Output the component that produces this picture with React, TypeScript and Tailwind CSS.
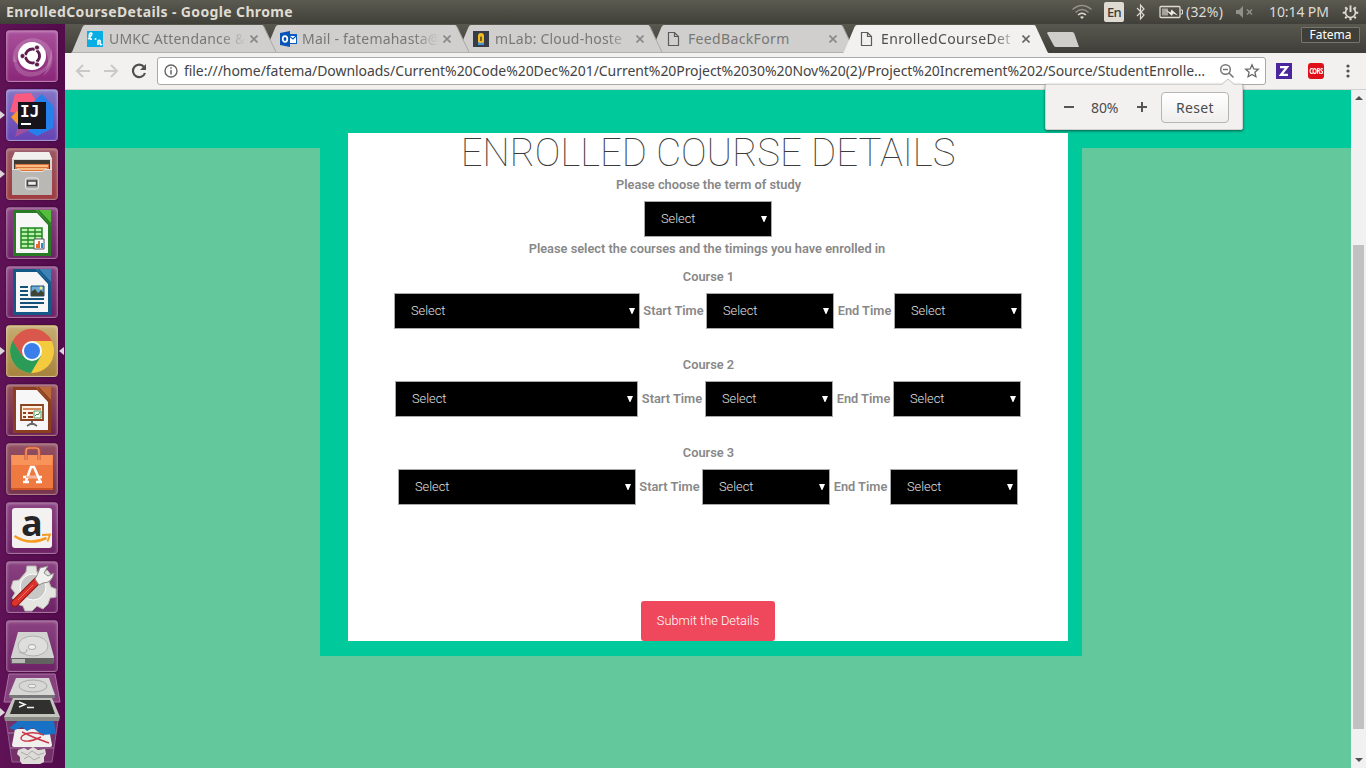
import React from "react";

type TileProps = { tone: string; children: React.ReactNode; left?: boolean; right?: boolean };

function Tile({ tone, children, left, right }: TileProps) {
  return (
    <div className={`relative h-[52px] w-[52px] shrink-0 rounded-[4px] border border-white/25 shadow-[inset_0_1px_3px_rgba(255,255,255,0.35),0_0_2px_rgba(0,0,0,0.5)] ${tone}`}>
      <svg viewBox="0 0 52 52" className="-ml-px -mt-px h-[52px] w-[52px] overflow-visible">{children}</svg>
      {left && <span className="absolute -left-[7px] top-[21px] h-0 w-0 border-y-[4px] border-l-[5px] border-y-transparent border-l-[#dcd6da]" />}
      {right && <span className="absolute -right-[7px] top-[21px] h-0 w-0 border-y-[4px] border-r-[5px] border-y-transparent border-r-[#dcd6da]" />}
    </div>
  );
}

function DocShape({ dark, mid }: { dark: string; mid: string }) {
  return (
    <>
      <path d="M7 3h26l12 12v34H7z" fill={dark} />
      <path d="M30 3h15v15z" fill={mid} />
      <path d="M32 3l13 14" stroke={dark} strokeWidth="1.5" />
      <path d="M10 6h21l11 12v28H10z" fill="#f7f7f7" />
    </>
  );
}

function Launcher() {
  return (
    <aside className="relative flex w-[65px] shrink-0 flex-col gap-[7px] overflow-hidden bg-gradient-to-r from-[#5f1256] to-[#530b4c] pl-1.5 pt-1.5">
      <Tile tone="bg-gradient-to-b from-[#a8509b] to-[#8b2679]">
        <path d="M7 32C4 12 27 0 42 15c8 10 5 25-5 31 6-10 7-19 1-27C28 10 12 15 11 32z" fill="#fff" opacity=".18" />
        <path d="M45 18c5 18-10 32-26 28C9 43 7 34 8 25c3 12 10 18 20 17 11-1 17-10 17-24z" fill="#fff" opacity=".18" />
        <circle cx="26" cy="26" r="14" fill="#fff" />
        <circle cx="26.500" cy="26" r="7" fill="none" stroke="#5e1d50" strokeWidth="3" />
        <path d="M26 26H14M26 26l6-10M26 26l6 10" stroke="#fff" strokeWidth="1.600" />
        <circle cx="26.500" cy="26" r="5.300" fill="#fff" />
        <g fill="#5e1d50" stroke="#fff" strokeWidth=".8"><circle cx="16.500" cy="26" r="2.500" /><circle cx="31" cy="17.500" r="2.500" /><circle cx="31" cy="34.500" r="2.500" /></g>
      </Tile>
      <Tile tone="bg-gradient-to-b from-[#8475c5] to-[#6742b3]" left>
        <path d="M9 5l16-1 8 12-12 9-17-2z" fill="#fb5a80" />
        <path d="M5 28l6-6 8 7-6 8z" fill="#f89a2c" />
        <path d="M36 5l12 13-1 21-16 8-14-8 6-22z" fill="#2680ec" />
        <path d="M13 33l14 6-18 9z" fill="#a04f9e" />
        <path d="M12 13h28v27H12z" fill="#16131a" />
        <path d="M15 35h10" stroke="#fff" strokeWidth="2" />
        <text x="14" y="28" fill="#fff" fontSize="16" fontWeight="700" className="font-['DejaVu_Sans_Mono',monospace]">IJ</text>
      </Tile>
      <Tile tone="bg-gradient-to-b from-[#9a5664] to-[#9e3b40]" left>
        <path d="M9 4h34l3 7v12H6V11z" fill="#d6d5d2" />
        <path d="M9 4h34l3 7H6z" fill="#f1f0ee" />
        <path d="M8 12h36v11H8z" fill="#403a35" />
        <path d="M9 16h34v7H9z" fill="#df7139" /><path d="M10 18h32M11 21h30" stroke="#ffd69c" strokeWidth="1.300" />
        <path d="M6 21h7l2 2h22l2-2h7v26H6z" fill="#b9b8b5" />
        <path d="M6 21.500h7l2 2h22l2-2h7" stroke="#e4e3df" fill="none" />
        <rect x="19.500" y="30" width="13" height="11" rx="2" fill="#aaa" stroke="#eee" strokeWidth="1" />
        <rect x="21.500" y="33" width="9" height="4.500" fill="#eee" stroke="#444" strokeWidth="1.500" />
      </Tile>
      <Tile tone="bg-gradient-to-b from-[#8b4382] to-[#6e2266]">
        <DocShape dark="#287a26" mid="#54bd3c" />
        <path d="M15 21h21v20H15z" fill="#b9f3ab" stroke="#218521" strokeWidth="1.500" />
        <path d="M15 25h21M15 29h21M15 33h21M15 37h21M22 21v20M29 21v20" stroke="#218521" strokeWidth="1.300" />
        <path d="M28 32h10v10H28z" fill="#fff" stroke="#56515a" /><path d="M30 41v-4h2v4M32 41v-7h2v7" fill="#e56b2a" /><path d="M35 41v-5h2v5" fill="#3588bf" />
      </Tile>
      <Tile tone="bg-gradient-to-b from-[#8b4382] to-[#6e2266]">
        <DocShape dark="#145888" mid="#3d83b5" />
        <path d="M14 21h8M14 25h8M14 29h8M14 33h24M14 37h24M14 41h18" stroke="#165179" strokeWidth="2" />
        <path d="M25 20h13v10H25z" fill="#69acd7" stroke="#174f72" /><path d="M25 30v-4l4-3 3 4 3-3 3 3v3z" fill="#3f4535" /><circle cx="35" cy="22" r="1.500" fill="#ffe76d" />
      </Tile>
      <Tile tone="bg-gradient-to-b from-[#c6ad73] to-[#a6823c]" left right>
        <circle cx="26" cy="26" r="22" fill="#f4cb3f" />
        <path d="M26 26L6.500 16A22 22 0 0 0 25 48l10-17z" fill="#2a9c58" />
        <path d="M26 26l-10 5L6.500 16A22 22 0 0 1 46 16H26z" fill="#d9584b" />
        <circle cx="26" cy="26" r="10" fill="#f7fcff" /><circle cx="26" cy="26" r="8" fill="#397ee9" />
      </Tile>
      <Tile tone="bg-gradient-to-b from-[#965056] to-[#6e2255]">
        <DocShape dark="#893f20" mid="#bc6a3a" />
        <path d="M15 21h22v15H15z" fill="#fff0e4" stroke="#8c431f" strokeWidth="1.800" />
        <path d="M17 25h18" stroke="#c76a36" strokeWidth="1.500" /><path d="M17 29h3M22 29h5M17 33h3M22 33h5" stroke="#923d1d" strokeWidth="2" />
        <path d="M28 27h7v7h-7z" fill="#fff" stroke="#4e9c58" /><path d="M29 32l2-2 1 1 2-3" stroke="#378d43" fill="none" />
        <path d="M26 37v3M21 42l5-3 5 3" stroke="#6b6570" strokeWidth="2" fill="none" />
      </Tile>
      <Tile tone="bg-gradient-to-b from-[#925064] to-[#77354d]">
        <path d="M5 12h42v34H5z" fill="#ee7a42" /><path d="M5 12h42l-1 10H6z" fill="#f8945a" /><path d="M5 45h42v2H5z" fill="#cf5527" />
        <path d="M20 17V8q0-3 3-3h7q3 0 3 3v9" fill="none" stroke="#c9542e" strokeWidth="3" /><path d="M20 17V8q0-3 3-3h7q3 0 3 3v9" fill="none" stroke="#f6a57c" strokeWidth="1.200" />
        <path d="M20 38l5-14h3l6 14M17 34h19M17 39h6M30 39h6" fill="none" stroke="#fff" strokeWidth="2.500" /><path d="M20 34h11" stroke="#e96d39" strokeWidth="1" />
      </Tile>
      <Tile tone="bg-gradient-to-b from-[#8b4382] to-[#6e2266]">
        <rect x="6" y="6" width="40" height="40" rx="3" fill="#f3f2f1" />
        <text x="15" y="34" fontSize="36" fontWeight="700" fill="#252528" className="font-['Open_Sans',sans-serif]">a</text>
        <path d="M8.500 34q15 10 32 2" fill="none" stroke="#f79920" strokeWidth="2.500" /><path d="M36 33l8-.5-2.500 7" fill="none" stroke="#f79920" strokeWidth="1.800" />
      </Tile>
      <Tile tone="bg-gradient-to-b from-[#8b4382] to-[#6e2266]">
        <path d="M20 11l1-6h9l1 6 5 2 5-4 5 6-3 6 2 5 5 2v8l-6 1-2 6-5 5-6-3-5 5h-7l-2-5-6-2-5-6 3-5-4-5 2-7 6-1z" fill="#e4e4e1" stroke="#b8b8b3" />
        <circle cx="27" cy="26" r="13" fill="#c8c9c7" stroke="#fff" />
        <path d="M9 42L33 18" stroke="#8d1614" strokeWidth="8" strokeLinecap="round" /><path d="M9 42L32 19" stroke="#db332b" strokeWidth="6" strokeLinecap="round" />
        <path d="M29 18q3-5 5-11l8-2-4 7 4 3 6-3q-2 10-11 10l-4 2z" fill="#f0f0ee" stroke="#8d8d89" /><path d="M12 39l15-15" stroke="#ed7368" strokeWidth="1" />
      </Tile>
      <Tile tone="bg-gradient-to-b from-[#8b4382] to-[#6e2266]">
        <path d="M5 37l7-25h29l7 25-1 7H5z" fill="#d2d2d0" /><path d="M4 38h44l-1 6H5z" fill="#626260" /><path d="M6 39h13v4H6z" fill="#b9b9b6" />
        <ellipse cx="27" cy="26" rx="15" ry="10" fill="#dededc" stroke="#b0b0ae" /><ellipse cx="26" cy="27" rx="4" ry="2.500" fill="#eee" stroke="#aaa" /><path d="M13 32q8 3 8-3" fill="none" stroke="#aaa" />
      </Tile>
      <svg viewBox="0 0 65 95" className="absolute left-0 top-[649px] h-[95px] w-[65px]">
        <path d="M9 1h46l5 28H4z" fill="#86427e" stroke="#a8749f" />
        <path d="M16 5h33l6 17H9z" fill="#d7d7d5" /><path d="M9 22h46v3H10z" fill="#77777a" /><ellipse cx="33" cy="13" rx="14" ry="6" fill="none" stroke="#aaa" /><ellipse cx="32" cy="13" rx="4" ry="1.800" fill="#eee" stroke="#aaa" />
        <path d="M6 47h52l-6 42H12z" fill="#743069" stroke="#935e8b" />
        <path d="M8 60h48M10 75h44" stroke="#a878a0" />
        <path d="M15 56h34l3 16q0 2-2 2H14q-2 0-2-2z" fill="#f0efee" />
        <path d="M9 55l9-7h36l2 13-14 1-9-7-6 3-5-4-7 3z" fill="#1871c4" />
        <path d="M44 62q-14-5-22 1c-4 5 5 8 19 1M22 59q12 6 27 11" fill="none" stroke="#c9394a" strokeWidth="1.400" />
        <path d="M18 77l6-2 4 2 5-3 5 3 7-1 1 5-2 3v5l-4 2H22l-2-3v-4l-3-3z" fill="#dddcd9" /><path d="M21 79l6 3 5-4 6 4 6-2M24 86l5-3 5 4 6-3" stroke="#aaa8a6" fill="none" />
        <path d="M13 25h39l8 19H4z" fill="#c4c4bf" /><path d="M4 44h56l-1 4H5z" fill="#898a86" /><path d="M15 27h35l5 14H10z" fill="#30312f" />
        <path d="M19 29l6 2.500-6 2.500M27 34.500h7" fill="none" stroke="#f1f1ee" strokeWidth="1.500" />
        <path d="M0 35l5 4.500-5 4z" fill="#dcd6da" />
      </svg>
    </aside>
  );
}

function TopBar() {
  return (
    <header className="flex h-6 shrink-0 items-center bg-gradient-to-b from-[#5c5b51] to-[#403f39] pl-1.5 pr-[7px] text-[14px] leading-none text-[#dfdbd2]">
      <span className="whitespace-nowrap text-[14px] font-bold tracking-[0.37px]">EnrolledCourseDetails - Google Chrome</span>
      <div className="flex-1" />
      <svg viewBox="0 0 20 16" className="mr-[12px] h-4 w-5 fill-none stroke-[#dfdbd2]">
        <path d="M.5 5.500q9.500-8 19 0M3.500 8.500q6.500-6 13 0" opacity=".45" strokeWidth="1.500" /><path d="M6 11q4-3.500 8 0" strokeWidth="1.500" /><path d="M8 13q2-1.500 4 0l-2 2z" className="fill-[#dfdbd2]" stroke="none" />
      </svg>
      <span className="mr-[12px] flex h-5 w-5 items-center justify-center rounded-[2px] bg-[#dfdbd2] text-[13px] font-medium tracking-[-0.8px] text-[#3c3b37]">En</span>
      <svg viewBox="0 0 10 18" className="mr-[13px] h-[18px] w-[10px] fill-none stroke-[#dfdbd2]"><path d="M1 5l7 7-3.500 4V2L8 6l-7 7" strokeWidth="1.200" /></svg>
      <svg viewBox="0 0 25 14" className="mr-[2px] h-[14px] w-[25px] fill-none stroke-[#dfdbd2]">
        <rect x="1" y="1.500" width="20" height="11" rx="1" strokeWidth="1.300" /><path d="M21.500 5h2v4h-2" /><path d="M3 3.500h6v7H3z" fill="#a5a299" stroke="none" /><path d="M6 4.500l5.500 3L12.500 4.500l6.500 6-5-2-1 2.500z" className="fill-[#efece5]" stroke="none" />
      </svg>
      <span className="w-[38px] whitespace-nowrap text-[14px] tracking-[0.2px]">(32%)</span>
      <svg viewBox="0 0 18 14" className="ml-[12px] mr-[15px] h-[14px] w-[18px]"><path d="M0 5h3l4-4v12L3 9H0z" fill="#92908a" /><path d="M11 4.500l5 5m0-5l-5 5" stroke="#92908a" strokeWidth="1.500" /></svg>
      <span className="w-[62px] whitespace-nowrap text-[14px] tracking-[-0.1px]">10:14 PM</span>
      <svg viewBox="0 0 18 18" className="ml-[11px] h-[17px] w-[17px] fill-none stroke-[#dfdbd2]">
        <path d="M6 4.600a5.300 5.300 0 1 0 6 0" strokeWidth="1.800" /><path d="M9 1.500v7" strokeWidth="2" />
        <path d="M3.400 3.400l1.600 1.600m9.600-1.600L13 5M.8 9.200h2.400m11.600 0h2.400M3.400 15l1.600-1.600m9.600 1.600L13 13.400M9 14.500v2.700" strokeWidth="2.200" />
      </svg>
    </header>
  );
}

const FileIcon = () => (
  <svg viewBox="0 0 16 16" className="h-4 w-4 fill-none stroke-[#5b5b5b]"><path d="M2.500 1.500h6l4 4v9h-10zM8.500 1.500v4h4" strokeWidth="1.200" /></svg>
);

const AttendanceIcon = () => (
  <svg viewBox="0 0 16 16" className="h-4 w-4"><path d="M0 0h16v16H0z" fill="#08aee3" /><path d="M1 8c3-2 5-6 3-6S1 9 5 8M11 14v-4c1-1 3-1 2 2 0 2 1 2 2 1" fill="none" stroke="#fff" strokeWidth="1.600" /><circle cx="8.500" cy="8" r="1" fill="#fff" /></svg>
);

const OutlookIcon = () => (
  <svg viewBox="0 0 17 16" className="h-4 w-[17px]"><path d="M9 3h8v10H9z" fill="#0a5cc0" /><path d="M9 5h7v7H9z" fill="#fff" /><path d="M9 5l4 3 3-3" fill="none" stroke="#0a5cc0" strokeWidth="1.200" /><path d="M0 2l10-2v16L0 14z" fill="#0755b8" /><ellipse cx="5" cy="8" rx="2.300" ry="2.900" fill="none" stroke="#fff" strokeWidth="1.700" /></svg>
);

const MlabIcon = () => (
  <svg viewBox="0 0 16 16" className="h-4 w-4"><path d="M0 0h16v16H0z" fill="#363d46" /><path d="M5 12V5q0-3 3-3t3 3v7z" fill="#f2bd26" /><path d="M7.200 10V6q.8-1.500 1.600 0v4z" fill="#594b22" /><path d="M5 11q3 2 6 0v3H5z" fill="#4a91d6" /></svg>
);

const tabs = [
  { title: "UMKC Attendance &", icon: <AttendanceIcon />, look: "z-[5] tracking-[0.2px]" },
  { title: "Mail - fatemahasta@", icon: <OutlookIcon />, look: "z-[4] tracking-[0.2px]" },
  { title: "mLab: Cloud-hoste", icon: <MlabIcon />, look: "z-[3] tracking-[0.2px]" },
  { title: "FeedBackForm", icon: <FileIcon />, look: "z-[2] tracking-[0.35px]", full: true },
  { title: "EnrolledCourseDet", icon: <FileIcon />, look: "z-[6] tracking-[0.35px]", active: true },
];

function TabStrip() {
  return (
    <div className="flex h-[29px] shrink-0 bg-gradient-to-b from-[#59584f] to-[#3f3e39] pl-[6px]">
      {tabs.map((t) => (
        <div key={t.title} className={`relative mr-[-13px] flex h-[29px] w-[206px] shrink-0 items-center pl-4 ${t.look}`}>
          <svg viewBox="0 0 206 29" className="absolute inset-0 h-[29px] w-[206px]">
            <path d="M0 29L1 28 11.500 3Q12.500 1 14 1H191q1.500 0 2 2L204.500 28l1 1z" fill={t.active ? "#f2f1ef" : "#d0cfcd"} />
            {!t.active && <path d="M192.500 2L205 28" fill="none" stroke="#aaa9a5" />}
            {!t.active && <path d="M1 28.500h204" stroke="#b2b1ae" />}
          </svg>
          <span className="relative flex w-[22px]">{t.icon}</span>
          <span className={`relative w-[137px] whitespace-nowrap text-[14px] leading-5 ${t.full ? "" : "[mask-image:linear-gradient(to_right,black_82%,transparent_100%)]"} ${t.active ? "text-[#4f4f4f]" : "text-[#777775]"}`}>{t.title}</span>
          <svg viewBox="0 0 8 8" className="relative ml-[4px] h-2 w-2"><path d="M.5.5l7 7m0-7l-7 7" stroke={t.active ? "#666" : "#888"} strokeWidth="1.600" /></svg>
        </div>
      ))}
      <svg viewBox="0 0 34 16" className="ml-[11px] mt-2 h-4 w-[34px]"><path d="M1 0h24q2 0 2.500 2l4.500 13H9q-2 0-2.500-2L0 1z" fill="#cfcecb" /></svg>
      <div className="flex-1" />
      <span className="mr-[6px] mt-[3px] flex h-4 w-[59px] items-center justify-center rounded-[1px] border border-[#77766d] bg-[#3f3e39] text-[12px] leading-none text-white">Fatema</span>
    </div>
  );
}

function Toolbar() {
  return (
    <div className="relative z-10 flex h-[37px] shrink-0 items-center border-b border-[#d2d1cf] bg-[#f2f1f0] pl-[10px]">
      <svg viewBox="0 0 16 16" className="h-4 w-4 fill-none stroke-[#c9c9c8]"><path d="M15 8H2m6-6L2 8l6 6" strokeWidth="2" /></svg>
      <svg viewBox="0 0 16 16" className="ml-3 h-4 w-4 fill-none stroke-[#c9c9c8]"><path d="M1 8h13M8 2l6 6-6 6" strokeWidth="2" /></svg>
      <svg viewBox="0 0 16 16" className="ml-3 h-4 w-4 fill-none stroke-[#505050]"><path d="M13 4A6.200 6.200 0 1 0 14 10" strokeWidth="2.200" /><path d="M15 1v6H9z" className="fill-[#505050]" stroke="none" /></svg>
      <div className="ml-[10px] flex h-7 w-[1109px] items-center rounded-[3px] border border-[#a9a9a7] bg-white pl-[6px]">
        <svg viewBox="0 0 14 14" className="h-[14px] w-[14px] fill-none stroke-[#666]"><circle cx="7" cy="7" r="6" strokeWidth="1.400" /><path d="M7 6v4.500M7 3.300v1.500" strokeWidth="1.500" /></svg>
        <span className="ml-[6px] w-[1030px] whitespace-nowrap text-[14px] leading-5 tracking-[-0.06px] text-[#444]">file:///home/fatema/Downloads/Current%20Code%20Dec%201/Current%20Project%2030%20Nov%20(2)/Project%20Increment%202/Source/StudentEnrolle…</span>
        <svg viewBox="0 0 16 16" className="ml-[5px] h-4 w-4 fill-none stroke-[#777]"><circle cx="6.500" cy="6.500" r="4.800" strokeWidth="1.500" /><path d="M4 6.500h5M10 10l4.500 4.500" strokeWidth="1.600" /></svg>
        <svg viewBox="0 0 16 16" className="ml-[9px] h-4 w-4 fill-none stroke-[#666]"><path d="M8 1.800l1.800 4.100 4.500.4-3.400 3 1 4.400L8 11.400l-3.900 2.300 1-4.400-3.400-3 4.500-.4z" strokeWidth="1.300" /></svg>
      </div>
      <span className="ml-[10px] flex h-4 w-4 items-center justify-center bg-[#4a259b]"><svg viewBox="0 0 16 16" className="h-4 w-4"><path d="M4 4.200h7L5 11.800h7" fill="none" stroke="#fff" strokeWidth="2.300" /></svg></span>
      <span className="ml-4 flex h-4 w-4 items-center justify-center rounded-[3px] bg-[#df1019] text-white"><span className="scale-y-150 text-[6px] font-bold leading-none tracking-[-0.5px]">CORS</span></span>
      <svg viewBox="0 0 4 14" className="ml-[22px] h-[14px] w-1 fill-[#505050]"><circle cx="2" cy="2" r="1.600" /><circle cx="2" cy="7" r="1.600" /><circle cx="2" cy="12" r="1.600" /></svg>
      <div className="absolute left-[980px] top-[31px] flex h-[46px] w-[198px] items-center rounded-[2px] border border-[#d1d0ce] bg-[#f2f1f0] text-[14px] text-[#4c4c4c] shadow-[0_1px_3px_rgba(0,0,0,0.55)]">
        <svg viewBox="0 0 14 7" className="absolute -top-[7px] left-[175px] h-[7px] w-[14px]"><path d="M0 7l7-6 7 6" fill="#f2f1f0" stroke="#c4c3c1" /></svg>
        <span className="ml-[18px] h-[2px] w-[10px] bg-[#555]" />
        <span className="ml-[17px] w-[30px] whitespace-nowrap text-[14px] tracking-[-0.1px]">80%</span>
        <svg viewBox="0 0 10 10" className="ml-[16px] h-[10px] w-[10px]"><path d="M0 5h10M5 0v10" stroke="#555" strokeWidth="2" /></svg>
        <span className="ml-[14px] flex h-[31px] w-[68px] items-center justify-center rounded-[4px] border border-[#b6b5b2] bg-gradient-to-b from-white to-[#efeeed] text-[14px] tracking-[0.3px]">Reset</span>
      </div>
    </div>
  );
}

function Select({ size }: { size: string }) {
  return (
    <div className={`flex h-9 shrink-0 items-center justify-between border border-[#a9a9a9] bg-black pb-px pl-4 pr-1 text-[12.8px] font-light text-[#e2e2e2] ${size}`}>
      <span>Select</span>
      <svg viewBox="0 0 6 6" className="h-[6px] w-[6px]"><path d="M0 0h6L3.400 6h-.8z" fill="#fff" /></svg>
    </div>
  );
}

function CourseRow({ n, size, label, gap }: { n: number; size: string; label: string; gap: string }) {
  return (
    <section className={`flex flex-col items-center ${gap}`}>
      <h2 className="h-[26px] pl-px text-[12.8px] font-semibold leading-[19px] text-[#888]">Course {n}</h2>
      <div className="flex items-center whitespace-nowrap text-[12.8px] font-semibold text-[#888]">
        <Select size={size} />
        <span className={`pb-px pl-px text-center ${label}`}>Start Time</span>
        <Select size="w-[128px]" />
        <span className="w-[60px] pb-px pl-px text-center">End Time</span>
        <Select size="w-[128px]" />
      </div>
    </section>
  );
}

function Page() {
  return (
    <main className="flex flex-1 flex-col bg-[#63c99d]">
      <div className="h-[58px] w-full shrink-0 bg-[#00c99c]" />
      <div className="ml-[255px] h-[508px] w-[762px] bg-[#00c99c] pl-7">
        <form className="relative -top-[15px] flex h-[508px] w-[720px] flex-col items-center bg-white font-[Roboto,sans-serif]">
          <h1 className="h-[42px] whitespace-nowrap text-[38.4px] font-thin leading-10 text-[#3c3c3c]">ENROLLED COURSE DETAILS</h1>
          <p className="h-[26px] pl-px text-[12.8px] font-semibold leading-5 text-[#888]">Please choose the term of study</p>
          <Select size="w-[128px]" />
          <p className="mt-[2px] pr-[2px] text-[12.8px] font-semibold leading-5 text-[#888]">Please select the courses and the timings you have enrolled in</p>
          <CourseRow n={1} size="w-[246px]" label="w-[66px]" gap="mt-2" />
          <CourseRow n={2} size="w-[243px]" label="w-[67px]" gap="mt-[26px]" />
          <CourseRow n={3} size="w-[238px]" label="w-[66px]" gap="mt-[26px]" />
          <div className="flex-1" />
          <button type="button" className="h-10 w-[134px] rounded-[3px] bg-[#ef485d] text-[12.8px] font-light text-white">Submit the Details</button>
        </form>
      </div>
    </main>
  );
}

export default function App() {
  return (
    <div className="flex h-[768px] w-[1366px] flex-col overflow-hidden font-['Noto_Sans',sans-serif]">
      <TopBar />
      <div className="flex min-h-0 flex-1">
        <Launcher />
        <div className="flex min-w-0 flex-1 flex-col">
          <TabStrip />
          <Toolbar />
          <div className="flex min-h-0 flex-1">
            <Page />
            <div className="flex w-[15px] flex-col items-center bg-[#f1f1f1] py-1.5">
              <svg viewBox="0 0 8 4" className="h-1 w-2"><path d="M4 0l4 4H0z" fill="#505050" /></svg>
              <div className="mt-[145px] h-[484px] w-[11px] bg-[#c1c1c1]" />
              <div className="flex-1" />
              <svg viewBox="0 0 8 4" className="h-1 w-2"><path d="M0 0h8L4 4z" fill="#505050" /></svg>
            </div>
          </div>
        </div>
      </div>
    </div>
  );
}
